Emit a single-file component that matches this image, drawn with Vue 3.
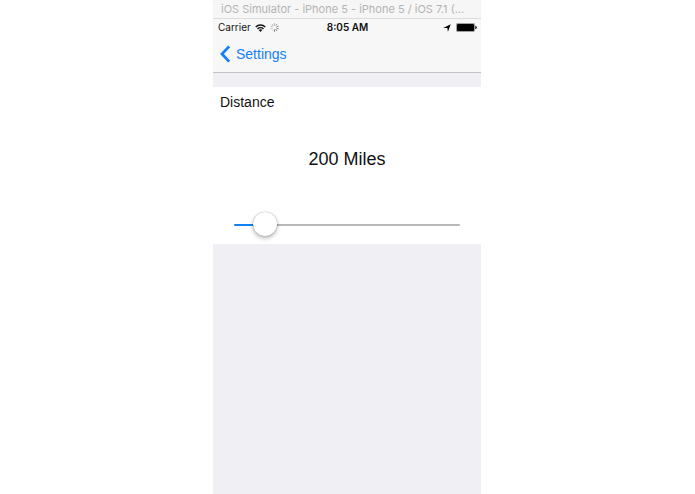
<template>
  <div class="page">
    <main class="phone">
      <header class="titlebar">{{ windowTitle }}</header>

      <div class="statusbar">
        <div class="carrier">
          <span>Carrier</span>
          <svg class="wifi" viewBox="0 0 22 16" aria-hidden="true">
            <path d="M1.5 6 A13.5 13.5 0 0 1 20.5 6" />
            <path d="M5 9.8 A8.5 8.5 0 0 1 17 9.8" />
            <path class="dot" d="M11 16 L7.4 12.2 A5 5 0 0 1 14.6 12.2 Z" />
          </svg>
          <svg class="spinner" viewBox="-10 -10 20 20" aria-hidden="true">
            <line
              v-for="n in 10"
              :key="n"
              x1="0"
              y1="-4.5"
              x2="0"
              y2="-9.5"
              :opacity="n / 14 + 0.15"
              :transform="`rotate(${n * 36 + 180})`"
            />
          </svg>
        </div>
        <strong class="time">8:05 AM</strong>
        <div class="indicators">
          <svg class="location" viewBox="0 0 14 14" aria-hidden="true">
            <path d="M13.5 0.5 L8.6 13.5 L7.6 7.2 L0.5 6.8 Z" />
          </svg>
          <svg class="battery" viewBox="0 0 42 18" aria-hidden="true">
            <rect x="0.8" y="0.8" width="36.4" height="16.4" rx="2.5" fill="none" stroke="#555" stroke-width="1.2" />
            <rect x="2" y="2" width="34" height="14" rx="1.5" />
            <path d="M38.6 5.5 Q41.6 6.5 41.6 9 T38.6 12.5 Z" />
          </svg>
        </div>
      </div>

      <nav class="navbar">
        <a href="#settings" class="back">
          <svg class="chevron" viewBox="0 0 11 18" aria-hidden="true">
            <path d="M9.2 1.4 L2 9 L9.2 16.6" />
          </svg>
          Settings
        </a>
      </nav>

      <section class="cell">
        <label for="distance" class="label">Distance</label>
        <output for="distance" class="value">{{ distance }} Miles</output>
        <input
          id="distance"
          v-model.number="distance"
          class="slider"
          type="range"
          :min="min"
          :max="max"
          step="10"
          :style="{ '--fill': fill }"
        />
      </section>
    </main>
  </div>
</template>

<script setup>
import { ref, computed } from 'vue'

const windowTitle = 'iOS Simulator - iPhone 5 - iPhone 5 / iOS 7.1 (...'
const min = 10
const max = 2000
const distance = ref(200)

const fill = computed(() => `${((distance.value - min) / (max - min)) * 100}%`)
</script>

<style>
body { background: #fff; }
</style>

<style scoped>
.page {
  display: flex;
  justify-content: center;
  min-height: 100vh;
  padding-right: 1px;
  font-family: "Liberation Sans", Arial, sans-serif;
  color: #111;
}
.phone { width: 100%; max-width: 268px; background: #efeff4; }

.titlebar {
  height: 18px;
  padding: 0 8px;
  border-bottom: 1px solid #dcdcdc;
  border-radius: 4px 4px 0 0;
  background: #f6f6f6;
  color: #b4b4b4;
  font-family: Inter, "Liberation Sans", sans-serif;
  font-size: 11px;
  line-height: 19px;
  white-space: nowrap;
}

.statusbar {
  display: grid;
  grid-template-columns: 1fr auto 1fr;
  align-items: center;
  height: 17px;
  padding: 0 4px 0 5px;
  background: #f7f7f7;
  font-family: Inter, "Liberation Sans", sans-serif;
  font-size: 10px;
  line-height: 17px;
}
.carrier { display: flex; align-items: center; gap: 4px; }
.wifi { width: 11px; height: 8px; fill: none; stroke: #111; stroke-width: 2.8; }
.wifi .dot { fill: #111; stroke: none; }
.spinner { width: 9px; height: 9px; stroke: #444; stroke-width: 1.8; }
.time { font-weight: 600; }
.indicators { display: flex; align-items: center; justify-content: flex-end; gap: 5px; }
.location { width: 8px; height: 8px; }
.battery { width: 21px; height: 9px; }

.navbar {
  display: flex;
  align-items: center;
  height: 36px;
  padding: 0 7px;
  border-bottom: 1px solid #c4c4c6;
  background: #f7f7f7;
}
.back {
  display: flex;
  align-items: center;
  gap: 5px;
  color: #1480f5;
  font-size: 14px;
  line-height: 18px;
  text-decoration: none;
}
.chevron { width: 11px; height: 18px; fill: none; stroke: #1480f5; stroke-width: 2.8; }

.cell {
  display: flex;
  flex-direction: column;
  margin-top: 14px;
  padding: 5px 7px 6px;
  background: #fff;
}
.label { font-size: 14px; line-height: 20px; }
.value { padding: 35px 0 41px; font-size: 18px; line-height: 24px; text-align: center; }

.slider {
  -webkit-appearance: none;
  appearance: none;
  height: 26px;
  margin: 0 14px;
  background: transparent;
}
.slider::-webkit-slider-runnable-track {
  height: 2px;
  border-radius: 1px;
  background: linear-gradient(to right, #1480f5 var(--fill), #b8b8b8 var(--fill));
}
.slider::-webkit-slider-thumb {
  -webkit-appearance: none;
  width: 24px;
  height: 24px;
  margin-top: -12px;
  border-radius: 50%;
  background: #fff;
  box-shadow: 0 0 1px rgba(0, 0, 0, 0.4), 0 2px 4px rgba(0, 0, 0, 0.3);
}
</style>
